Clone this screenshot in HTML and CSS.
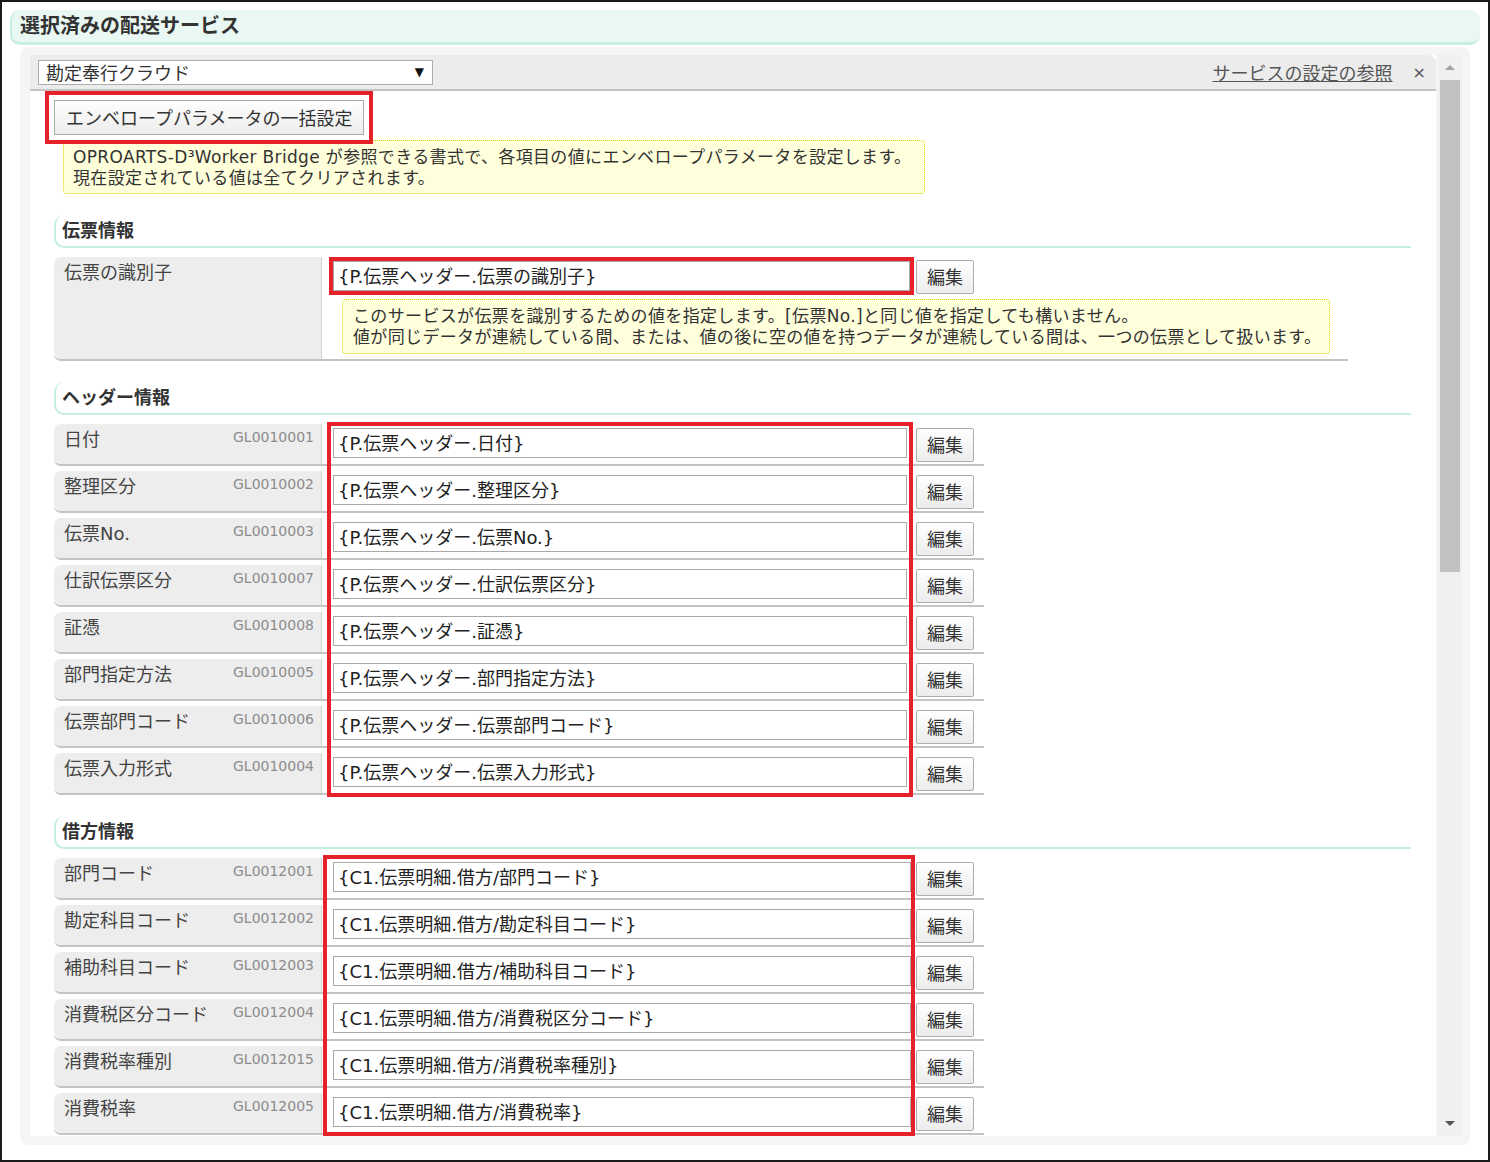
FILE: index.html
```html
<!DOCTYPE html>
<html lang="ja">
  <head>
    <meta charset="utf-8">
    <title>選択済みの配送サービス</title>
    <link rel="stylesheet" href="styles.css">
  </head>

  <body>
    <div class="frame">
      <h1 class="title">選択済みの配送サービス</h1>
      <div class="panel">
        <div class="main">
          <div class="toolbar">
            <div class="select"><span>勘定奉行クラウド</span><span class="caret">▼</span></div>
            <a class="ref-link" href="#">サービスの設定の参照</a>
            <span class="close">×</span>
          </div>
          <div class="scroll">
            <button class="bulk-btn">エンベロープパラメータの一括設定</button>
            <div class="note note-top">OPROARTS-D³Worker Bridge が参照できる書式で、各項目の値にエンベロープパラメータを設定します。<br>現在設定されている値は全てクリアされます。</div>

            <h2 class="section">伝票情報</h2>
            <div class="rows">
              <div class="row">
                <div class="label"><span class="name">伝票の識別子</span></div>
                <div class="field field-tall">
                  <div class="field-line">
                    <input class="value value-id" type="text" value="{P.伝票ヘッダー.伝票の識別子}">
                    <button class="edit">編集</button>
                  </div>
                  <div class="note note-field">このサービスが伝票を識別するための値を指定します。[伝票No.]と同じ値を指定しても構いません。<br>値が同じデータが連続している間、または、値の後に空の値を持つデータが連続している間は、一つの伝票として扱います。</div>
                </div>
              </div>
            </div>

            <h2 class="section">ヘッダー情報</h2>
            <div class="rows rows-header">
              <div class="highlight"></div>
              <div class="row">
                <div class="label"><span class="name">日付</span><span class="code">GL0010001</span></div>
                <div class="field"><input class="value" type="text" value="{P.伝票ヘッダー.日付}"><button class="edit">編集</button></div>
              </div>
              <div class="row">
                <div class="label"><span class="name">整理区分</span><span class="code">GL0010002</span></div>
                <div class="field"><input class="value" type="text" value="{P.伝票ヘッダー.整理区分}"><button class="edit">編集</button></div>
              </div>
              <div class="row">
                <div class="label"><span class="name">伝票No.</span><span class="code">GL0010003</span></div>
                <div class="field"><input class="value" type="text" value="{P.伝票ヘッダー.伝票No.}"><button class="edit">編集</button></div>
              </div>
              <div class="row">
                <div class="label"><span class="name">仕訳伝票区分</span><span class="code">GL0010007</span></div>
                <div class="field"><input class="value" type="text" value="{P.伝票ヘッダー.仕訳伝票区分}"><button class="edit">編集</button></div>
              </div>
              <div class="row">
                <div class="label"><span class="name">証憑</span><span class="code">GL0010008</span></div>
                <div class="field"><input class="value" type="text" value="{P.伝票ヘッダー.証憑}"><button class="edit">編集</button></div>
              </div>
              <div class="row">
                <div class="label"><span class="name">部門指定方法</span><span class="code">GL0010005</span></div>
                <div class="field"><input class="value" type="text" value="{P.伝票ヘッダー.部門指定方法}"><button class="edit">編集</button></div>
              </div>
              <div class="row">
                <div class="label"><span class="name">伝票部門コード</span><span class="code">GL0010006</span></div>
                <div class="field"><input class="value" type="text" value="{P.伝票ヘッダー.伝票部門コード}"><button class="edit">編集</button></div>
              </div>
              <div class="row">
                <div class="label"><span class="name">伝票入力形式</span><span class="code">GL0010004</span></div>
                <div class="field"><input class="value" type="text" value="{P.伝票ヘッダー.伝票入力形式}"><button class="edit">編集</button></div>
              </div>
            </div>

            <h2 class="section">借方情報</h2>
            <div class="rows rows-debit">
              <div class="highlight"></div>
              <div class="row">
                <div class="label"><span class="name">部門コード</span><span class="code">GL0012001</span></div>
                <div class="field"><input class="value" type="text" value="{C1.伝票明細.借方/部門コード}"><button class="edit">編集</button></div>
              </div>
              <div class="row">
                <div class="label"><span class="name">勘定科目コード</span><span class="code">GL0012002</span></div>
                <div class="field"><input class="value" type="text" value="{C1.伝票明細.借方/勘定科目コード}"><button class="edit">編集</button></div>
              </div>
              <div class="row">
                <div class="label"><span class="name">補助科目コード</span><span class="code">GL0012003</span></div>
                <div class="field"><input class="value" type="text" value="{C1.伝票明細.借方/補助科目コード}"><button class="edit">編集</button></div>
              </div>
              <div class="row">
                <div class="label"><span class="name">消費税区分コード</span><span class="code">GL0012004</span></div>
                <div class="field"><input class="value" type="text" value="{C1.伝票明細.借方/消費税区分コード}"><button class="edit">編集</button></div>
              </div>
              <div class="row">
                <div class="label"><span class="name">消費税率種別</span><span class="code">GL0012015</span></div>
                <div class="field"><input class="value" type="text" value="{C1.伝票明細.借方/消費税率種別}"><button class="edit">編集</button></div>
              </div>
              <div class="row">
                <div class="label"><span class="name">消費税率</span><span class="code">GL0012005</span></div>
                <div class="field"><input class="value" type="text" value="{C1.伝票明細.借方/消費税率}"><button class="edit">編集</button></div>
              </div>
            </div>
          </div>
        </div>
        <div class="scrollbar">
          <div class="sb-btn"><span class="arrow-up"></span></div>
          <div class="sb-thumb"></div>
          <div class="sb-track"></div>
          <div class="sb-btn"><span class="arrow-down"></span></div>
        </div>
      </div>
    </div>
  </body>
</html>
```

FILE: styles.css
```css
*, *:before, *:after {
  box-sizing: border-box;
}
html, body {
  padding: 0;
  margin: 0;
}
body {
  font-family: "DejaVu Sans", "Noto Sans CJK JP", sans-serif;
  color: #333;
  background: #fff;
}
.frame {
  display: flex;
  flex-direction: column;
  width: 1490px;
  height: 1162px;
  padding: 8px;
  border: 2px solid #1a1a1a;
}
.title {
  flex: none;
  height: 35px;
  margin: 0;
  padding-left: 8px;
  font-size: 20px;
  line-height: 32px;
  font-weight: bold;
  color: #333;
  background: #e9f8f3;
  border-left: 2px solid #c6efe1;
  border-bottom: 3px solid #c6efe1;
  border-radius: 10px;
}
.panel {
  flex: 1;
  display: flex;
  gap: 2px;
  min-height: 0;
  margin: 2px 10px 7px 10px;
  padding: 8px 8px 9px 10px;
  background: #f5f5f5;
  border-radius: 8px;
}
.main {
  flex: 1;
  display: flex;
  flex-direction: column;
  min-width: 0;
  background: #fff;
}

/* toolbar */
.toolbar {
  flex: none;
  display: flex;
  align-items: center;
  height: 36px;
  padding: 0 10px 0 8px;
  background: #ececec;
  border-bottom: 2px solid #c3c3c3;
  border-radius: 0 8px 0 0;
}
.select {
  display: flex;
  align-items: center;
  justify-content: space-between;
  width: 395px;
  height: 25px;
  padding: 0 8px 0 7px;
  font-size: 18px;
  color: #333;
  background: #fff;
  border: 1px solid #acacac;
}
.caret {
  font-size: 12px;
  color: #111;
}
.ref-link {
  margin-left: auto;
  font-size: 18px;
  color: #555;
  text-decoration: underline;
}
.close {
  margin-left: 20px;
  font-size: 16px;
  color: #555;
}

/* scroll area */
.scroll {
  flex: 1;
  overflow: hidden;
  padding: 9px 25px 0 24px;
}
.bulk-btn {
  position: relative;
  z-index: 1;
  display: block;
  height: 35px;
  padding: 0 11px 2px;
  font-family: inherit;
  font-size: 18px;
  color: #333;
  background: linear-gradient(#ffffff, #ececec);
  border: 1px solid #aaa;
  border-radius: 0;
  outline: 4px solid #e6212a;
  outline-offset: 5px;
}
.note {
  font-size: 17px;
  line-height: 21px;
  letter-spacing: 0.35px;
  white-space: nowrap;
  color: #333;
  background: #ffffdc;
  border: 1px dotted #d6d600;
  border-radius: 4px;
}
.note-top {
  width: 862px;
  margin: 5px 0 0 9px;
  padding: 6px 9px 4px 9px;
}
.section {
  height: 33px;
  margin: 21px 0 0;
  padding-left: 6px;
  font-size: 18px;
  line-height: 31px;
  font-weight: bold;
  color: #333;
  border-left: 2px solid #c3eee1;
  border-bottom: 2px solid #c3eee1;
  border-radius: 10px 0 0 10px;
}

/* rows */
.rows {
  position: relative;
  display: flex;
  flex-direction: column;
  align-items: flex-start;
  gap: 5px;
  margin-top: 9px;
}
.row {
  display: flex;
  border-bottom: 2px solid #c4c4c4;
  border-radius: 7px 0 0 7px;
}
.label {
  flex: none;
  display: flex;
  justify-content: space-between;
  align-items: flex-start;
  width: 268px;
  min-height: 40px;
  padding: 4px 7px 0 10px;
  background: #ededed;
  border-right: 1px solid #d3d3d3;
  border-radius: 7px 0 0 7px;
}
.name {
  font-size: 18px;
  line-height: 24px;
  color: #444;
}
.code {
  font-family: "DejaVu Sans", sans-serif;
  font-size: 14px;
  line-height: 18px;
  color: #8c8c8c;
}
.field {
  display: flex;
  align-items: flex-start;
  height: 40px;
  padding: 4px 10px 0 11px;
}
.field-tall {
  display: block;
  height: auto;
  padding: 3px 18px 5px 11px;
}
.field-line {
  display: flex;
  align-items: flex-start;
}
.value {
  width: 574px;
  height: 30px;
  margin: 0;
  padding: 0 4px 3px;
  font-family: inherit;
  font-size: 18px;
  color: #222;
  background: #fff;
  border: 1px solid #a9a9a9;
  border-radius: 0;
}
.value-id {
  width: 577px;
  margin-top: 1px;
  outline: 4px solid #e6212a;
}
.edit {
  flex: none;
  width: 58px;
  height: 34px;
  margin-left: 9px;
  padding: 0 0 3px;
  font-family: inherit;
  font-size: 18px;
  color: #333;
  background: linear-gradient(#ffffff, #ececec);
  border: 1px solid #adadad;
  border-radius: 2px;
}
.value-id + .edit {
  margin-left: 6px;
}
.note-field {
  width: 988px;
  margin: 5px 0 0 9px;
  padding: 6px 10px 5px 10px;
}
.rows-debit .value {
  width: 578px;
}
.rows-debit .edit {
  margin-left: 5px;
}

/* red annotation boxes over the value column */
.highlight {
  position: absolute;
  z-index: 1;
  pointer-events: none;
  border: 4px solid #e6212a;
}
.rows-header .highlight {
  left: 273px;
  top: -2px;
  bottom: -2px;
  width: 586px;
}
.rows-debit .highlight {
  left: 269px;
  top: -3px;
  bottom: -1px;
  width: 592px;
}

/* scrollbar */
.scrollbar {
  flex: none;
  display: flex;
  flex-direction: column;
  width: 24px;
  background: #f0f0f0;
}
.sb-btn {
  flex: none;
  display: flex;
  align-items: center;
  justify-content: center;
  height: 25px;
}
.arrow-up {
  border-left: 5px solid transparent;
  border-right: 5px solid transparent;
  border-bottom: 5px solid #a3a3a3;
}
.arrow-down {
  border-left: 5px solid transparent;
  border-right: 5px solid transparent;
  border-top: 5px solid #555;
}
.sb-thumb {
  flex: none;
  height: 492px;
  margin: 0 2px;
  background: #c1c1c1;
}
.sb-track {
  flex: 1;
}
```
